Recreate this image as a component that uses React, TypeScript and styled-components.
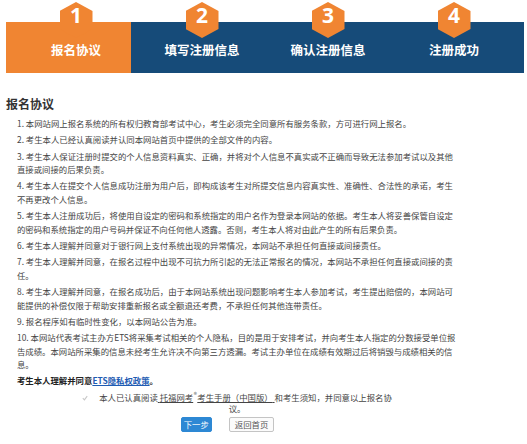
import React from "react";
import styled, { createGlobalStyle } from "styled-components";

const Global = createGlobalStyle`
  html, body { margin: 0; padding: 0; background: #ffffff; }
  * { box-sizing: border-box; }
`;

const CJK = `"Noto Sans CJK SC", "Noto Sans", sans-serif`;
const ORANGE = "#F08532";
const NAVY = "#164B79";

const Page = styled.div`
  width: 527px;
  padding: 0 3px 0 6px;
  font-family: ${CJK};
  color: #444;
`;

const StepBar = styled.div`
  margin-top: 22px;
  width: 518px;
  height: 51px;
  display: flex;
  padding-left: 7px;
  background: linear-gradient(to right, ${ORANGE} 0 125px, ${NAVY} 125px);
`;

const Step = styled.div`
  width: 126px;
  display: flex;
  flex-direction: column;
  align-items: center;
`;

const Hex = styled.div`
  width: 33px;
  height: 36px;
  margin-top: -20px;
  background: ${ORANGE};
  clip-path: polygon(50% 0, 100% 25%, 100% 75%, 50% 100%, 0 75%, 0 25%);
  display: flex;
  justify-content: center;
  align-items: flex-start;
  color: #fff;
  font-family: "Open Sans", "Lato", sans-serif;
  font-weight: 700;
  font-size: 21px;
  line-height: 26px;
`;

const StepLabel = styled.div`
  margin-top: 5px;
  font-family: ${CJK};
  font-weight: 700;
  font-size: 12.5px;
  line-height: 14px;
  color: #fff;
  white-space: nowrap;
`;

const Title = styled.h2`
  margin: 23px 0 5px 0;
  font-family: ${CJK};
  font-weight: 700;
  font-size: 12px;
  line-height: 16px;
  color: #333;
`;

const Terms = styled.ol`
  list-style: none;
  margin: 0 0 0 11px;
  padding: 0;
  width: 443px;
`;

const Term = styled.li`
  font-size: 8.4px;
  line-height: 13.5px;
  color: #444;
  margin-bottom: 2.8px;
`;

const Consent = styled.p`
  margin: 0 0 0 11px;
  font-size: 8.4px;
  line-height: 13.5px;
  font-weight: 700;
  color: #222;
`;

const PolicyLink = styled.a`
  color: #1f5cb3;
  text-decoration: underline;
`;

const CheckRow = styled.p`
  margin: 2.75px 0 0 71px;
  width: 320px;
  text-align: center;
  font-size: 8.4px;
  line-height: 11px;
  color: #444;
`;

const CheckMark = styled.svg`
  width: 6px;
  height: 6px;
  margin-right: 11px;
  vertical-align: 0;
`;

const Handbook = styled.span`
  text-decoration: underline;
`;

const Sup = styled.span`
  display: inline-block;
  font-size: 6.5px;
  line-height: 6px;
  vertical-align: 4px;
  margin: 0 0.5px;
`;

const ButtonRow = styled.div`
  margin: 3.5px 0 0 69px;
  width: 320px;
  padding-right: 15px;
  display: flex;
  justify-content: center;
  gap: 17px;
`;

const Button = styled.button<{ $primary?: boolean }>`
  height: 15px;
  padding: ${(p) => (p.$primary ? "0 2px" : "0 5px")};
  border: 1px solid ${(p) => (p.$primary ? "#2D88D4" : "#c4c4c4")};
  border-radius: 2px;
  background: ${(p) => (p.$primary ? "#2D88D4" : "#fbfbfb")};
  color: ${(p) => (p.$primary ? "#fff" : "#555")};
  font-family: ${CJK};
  font-size: 8.4px;
  line-height: 13px;
  cursor: pointer;
`;

const steps = ["报名协议", "填写注册信息", "确认注册信息", "注册成功"];

const terms = [
  "1. 本网站网上报名系统的所有权归教育部考试中心，考生必须完全同意所有服务条款，方可进行网上报名。",
  "2. 考生本人已经认真阅读并认同本网站首页中提供的全部文件的内容。",
  "3. 考生本人保证注册时提交的个人信息资料真实、正确，并将对个人信息不真实或不正确而导致无法参加考试以及其他直接或间接的后果负责。",
  "4. 考生本人在提交个人信息成功注册为用户后，即构成该考生对所提交信息内容真实性、准确性、合法性的承诺，考生不再更改个人信息。",
  "5. 考生本人注册成功后，将使用自设定的密码和系统指定的用户名作为登录本网站的依据。考生本人将妥善保管自设定的密码和系统指定的用户号码并保证不向任何他人透露。否则，考生本人将对由此产生的所有后果负责。",
  "6. 考生本人理解并同意对于银行网上支付系统出现的异常情况，本网站不承担任何直接或间接责任。",
  "7. 考生本人理解并同意，在报名过程中出现不可抗力所引起的无法正常报名的情况，本网站不承担任何直接或间接的责任。",
  "8. 考生本人理解并同意，在报名成功后，由于本网站系统出现问题影响考生本人参加考试，考生提出赔偿的，本网站可能提供的补偿仅限于帮助安排重新报名或全额退还考费，不承担任何其他连带责任。",
  "9. 报名程序如有临时性变化，以本网站公告为准。",
  "10. 本网站代表考试主办方ETS将采集考试相关的个人隐私，目的是用于安排考试，并向考生本人指定的分数接受单位报告成绩。本网站所采集的信息未经考生允许决不向第三方透漏。考试主办单位在成绩有效期过后将销毁与成绩相关的信息。",
];

export default function App() {
  return (
    <Page>
      <Global />
      <StepBar>
        {steps.map((s, i) => (
          <Step key={s}>
            <Hex>{i + 1}</Hex>
            <StepLabel>{s}</StepLabel>
          </Step>
        ))}
      </StepBar>
      <Title>报名协议</Title>
      <Terms>
        {terms.map((t) => (
          <Term key={t}>{t}</Term>
        ))}
      </Terms>
      <Consent>
        考生本人理解并同意<PolicyLink href="#">ETS隐私权政策</PolicyLink>。
      </Consent>
      <CheckRow>
        <CheckMark viewBox="0 0 6 6">
          <path d="M0.8 3.2 L2.4 4.8 L5.2 1.2" fill="none" stroke="#c8c8c8" strokeWidth="1.1" />
        </CheckMark>
        本人已认真阅读
        <Handbook>
          {" "}托福网考<Sup>®</Sup>考生手册（中国版）{" "}
        </Handbook>
        和考生须知，并同意以上报名协议。
      </CheckRow>
      <ButtonRow>
        <Button $primary>下一步</Button>
        <Button>返回首页</Button>
      </ButtonRow>
    </Page>
  );
}
